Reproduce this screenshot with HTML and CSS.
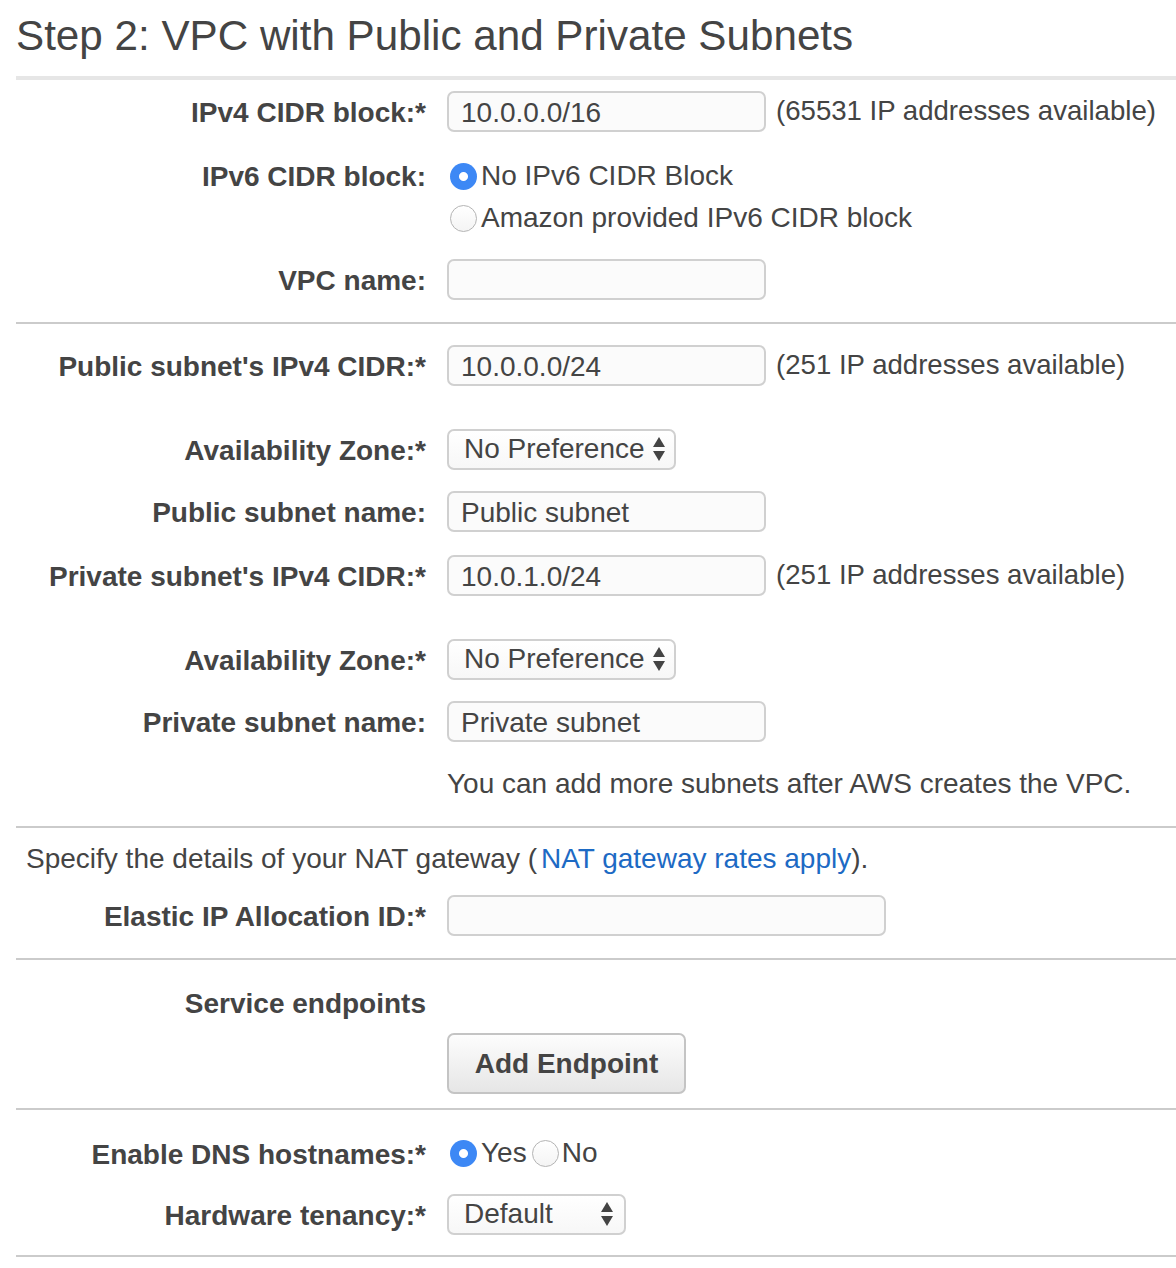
FILE: index.html
```html
<!DOCTYPE html>
<html>
<head>
<meta charset="utf-8">
<link rel="stylesheet" href="styles.css">
</head>
<body>
<div class="page">
  <h1 class="title">Step 2: VPC with Public and Private Subnets</h1>

  <div class="section section-first s1">
    <div class="row">
      <div class="label">IPv4 CIDR block:*</div>
      <div class="control">
        <div class="input">10.0.0.0/16</div>
        <span class="hint">(65531 IP addresses available)</span>
      </div>
    </div>
    <div class="row-radios">
      <div class="label label-top">IPv6 CIDR block:</div>
      <div class="radio-list">
        <div class="radio-line"><span class="radio checked"></span><span>No IPv6 CIDR Block</span></div>
        <div class="radio-line"><span class="radio"></span><span>Amazon provided IPv6 CIDR block</span></div>
      </div>
    </div>
    <div class="row m20">
      <div class="label">VPC name:</div>
      <div class="control"><div class="input"></div></div>
    </div>
  </div>

  <div class="section s2">
    <div class="row">
      <div class="label">Public subnet's IPv4 CIDR:*</div>
      <div class="control">
        <div class="input">10.0.0.0/24</div>
        <span class="hint">(251 IP addresses available)</span>
      </div>
    </div>
    <div class="row m44">
      <div class="label">Availability Zone:*</div>
      <div class="control">
        <div class="select select-az"><span>No Preference</span>
          <svg class="arrows" width="14" height="26" viewBox="0 0 14 26"><path d="M7 1 L13 11 L1 11 Z" fill="#444"/><path d="M1 15 L13 15 L7 25 Z" fill="#444"/></svg>
        </div>
      </div>
    </div>
    <div class="row m22">
      <div class="label">Public subnet name:</div>
      <div class="control"><div class="input">Public subnet</div></div>
    </div>
    <div class="row m24">
      <div class="label">Private subnet's IPv4 CIDR:*</div>
      <div class="control">
        <div class="input">10.0.1.0/24</div>
        <span class="hint">(251 IP addresses available)</span>
      </div>
    </div>
    <div class="row m44">
      <div class="label">Availability Zone:*</div>
      <div class="control">
        <div class="select select-az"><span>No Preference</span>
          <svg class="arrows" width="14" height="26" viewBox="0 0 14 26"><path d="M7 1 L13 11 L1 11 Z" fill="#444"/><path d="M1 15 L13 15 L7 25 Z" fill="#444"/></svg>
        </div>
      </div>
    </div>
    <div class="row m22">
      <div class="label">Private subnet name:</div>
      <div class="control"><div class="input">Private subnet</div></div>
    </div>
    <div class="row m23">
      <div class="label"></div>
      <div class="control"><span class="note">You can add more subnets after AWS creates the VPC.</span></div>
    </div>
  </div>

  <div class="section s3">
    <div class="intro">Specify the details of your NAT gateway (<a class="link" href="#">NAT gateway rates apply</a>).</div>
    <div class="row m16">
      <div class="label">Elastic IP Allocation ID:*</div>
      <div class="control"><div class="input input-wide"></div></div>
    </div>
  </div>

  <div class="section s4">
    <div class="row">
      <div class="label">Service endpoints</div>
      <div class="control"></div>
    </div>
    <div class="row-btn">
      <div class="label"></div>
      <div class="control"><button class="btn">Add Endpoint</button></div>
    </div>
  </div>

  <div class="section s5">
    <div class="row">
      <div class="label">Enable DNS hostnames:*</div>
      <div class="control">
        <span class="radio checked"></span><span class="radio-text">Yes</span>
        <span class="radio radio-gap"></span><span class="radio-text">No</span>
      </div>
    </div>
    <div class="row m21">
      <div class="label">Hardware tenancy:*</div>
      <div class="control">
        <div class="select select-tenancy"><span>Default</span>
          <svg class="arrows" width="14" height="26" viewBox="0 0 14 26"><path d="M7 1 L13 11 L1 11 Z" fill="#444"/><path d="M1 15 L13 15 L7 25 Z" fill="#444"/></svg>
        </div>
      </div>
    </div>
  </div>
  <div class="section section-end"></div>
</div>
</body>
</html>
```

FILE: styles.css
```css
html, body {
  margin: 0;
  padding: 0;
  background: #ffffff;
}

body {
  font-family: "Liberation Sans", Arial, Helvetica, sans-serif;
  color: #444444;
  font-size: 28px;
}

.page {
  padding-left: 16px;
  width: 1160px;
  overflow: hidden;
}

.title {
  margin: 0 0 16px 0;
  padding-top: 12px;
  font-size: 42.2px;
  font-weight: normal;
  line-height: 48px;
  color: #444444;
  white-space: nowrap;
}

.section {
  border-top: 2px solid #cbcbcb;
}

.section-first {
  border-top: 4px solid #e6e6e6;
}

.s1 { padding: 11px 0 23px; }
.s2 { padding: 21px 0 22px; }
.s3 { padding: 11px 0 23px; }
.s4 { padding: 22px 0 14px; }
.s5 { padding: 23px 0 21px; }

.row {
  display: flex;
  align-items: center;
  height: 40px;
}

.m16 { margin-top: 16px; }
.m20 { margin-top: 20px; }
.m21 { margin-top: 21px; }
.m22 { margin-top: 22px; }
.m23 { margin-top: 23px; }
.m24 { margin-top: 24px; }
.m44 { margin-top: 44px; }

.label {
  width: 410px;
  flex: none;
  text-align: right;
  font-weight: bold;
  white-space: nowrap;
  line-height: 40px;
  margin-top: 4px;
}

.control {
  margin-left: 21px;
  display: flex;
  align-items: center;
  white-space: nowrap;
}

.input {
  box-sizing: border-box;
  width: 319px;
  height: 41px;
  border: 2px solid #d0d0d0;
  border-radius: 7px;
  background: #fbfbfb;
  padding-left: 12px;
  line-height: 39px;
  color: #444444;
}

.input-wide {
  width: 439px;
}

.hint {
  margin-left: 10px;
  font-size: 27.6px;
}

.row-radios {
  display: flex;
  margin-top: 24px;
}

.label-top {
  line-height: 42px;
  margin-top: 1px;
}

.radio-list {
  margin-left: 21px;
  display: flex;
  flex-direction: column;
}

.radio-line {
  display: flex;
  align-items: center;
  height: 42px;
  white-space: nowrap;
}

.radio {
  box-sizing: border-box;
  display: inline-block;
  flex: none;
  width: 27px;
  height: 27px;
  border-radius: 50%;
  margin-left: 3px;
  margin-right: 4px;
  border: 1.5px solid #b4b4b4;
  background: linear-gradient(#ffffff, #f4f4f4);
}

.radio.checked {
  border: none;
  background: radial-gradient(circle, #ffffff 0, #ffffff 4px, #3d88f5 5px, #3d88f5 100%);
}

.radio-gap {
  margin-left: 5px;
  margin-right: 3px;
}

.note {
  line-height: 40px;
}

.intro {
  height: 40px;
  line-height: 40px;
  padding-left: 10px;
  white-space: nowrap;
}

.link {
  color: #1d6ac4;
  text-decoration: none;
  margin-left: 4px;
}

.select {
  box-sizing: border-box;
  height: 41px;
  border: 2px solid #d0d0d0;
  border-radius: 7px;
  background: linear-gradient(#ffffff, #f7f7f7);
  display: flex;
  align-items: center;
  justify-content: space-between;
  padding-left: 15px;
  padding-right: 8px;
}

.select-az {
  width: 229px;
}

.select-tenancy {
  width: 179px;
  padding-right: 10px;
}

.arrows {
  display: block;
}

.row-btn {
  display: flex;
  margin-top: 11px;
}

.btn {
  box-sizing: border-box;
  width: 239px;
  height: 61px;
  border: 2px solid #c4c4c4;
  border-radius: 7px;
  background: linear-gradient(#fdfdfd, #e6e6e6);
  font-family: "Liberation Sans", Arial, Helvetica, sans-serif;
  font-size: 28px;
  font-weight: bold;
  color: #444444;
  padding: 0;
  text-align: center;
}

.section-end {
  height: 20px;
}
```
